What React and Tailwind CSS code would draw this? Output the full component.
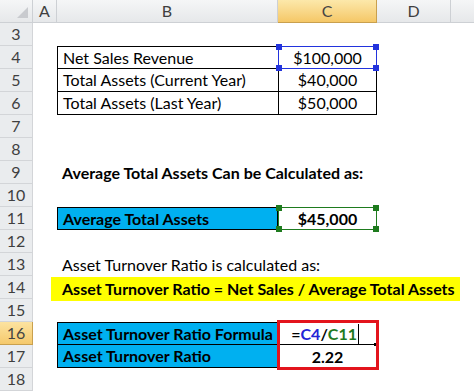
import React from 'react';

const font = { fontFamily: 'Lato, "Liberation Sans", sans-serif' };

const Head = ({ w, label, active }) => (
  <div
    className={`flex h-full shrink-0 items-center justify-center border-r border-b text-[16px] ${
      active
        ? 'border-[#c9a04e] bg-gradient-to-b from-[#fce8aa] to-[#f5c766] text-[#444]'
        : 'border-[#cdd0d4] bg-gradient-to-b from-[#f5f6f7] to-[#e6e8ea] text-[#3f3f3f]'
    } ${w}`}
  >
    {label}
  </div>
);

const Row = ({ n, active, children }) => (
  <div className="flex h-[23px]">
    <div
      className={`flex w-[33px] shrink-0 items-center justify-center border-r border-b text-[16px] ${
        active
          ? 'border-[#c9a04e] bg-gradient-to-b from-[#fce3a0] to-[#f5c96c] text-[#444]'
          : 'border-[#d3d5d8] bg-[#eaecee] text-[#3f3f3f]'
      }`}
    >
      {n}
    </div>
    <div className="w-[24px] shrink-0" />
    {children}
  </div>
);

const Handles = ({ color }) => (
  <>
    <span className={`absolute -left-[3px] -top-[3px] h-[6px] w-[6px] ${color}`} />
    <span className={`absolute -right-[3px] -top-[3px] h-[6px] w-[6px] ${color}`} />
    <span className={`absolute -bottom-[3px] -left-[3px] h-[6px] w-[6px] ${color}`} />
    <span className={`absolute -bottom-[3px] -right-[3px] h-[6px] w-[6px] ${color}`} />
  </>
);

const Empty = ({ n }) => (
  <Row n={n}>
    <div className="flex-1" />
  </Row>
);

export default function App() {
  return (
    <div className="relative h-[391px] w-[474px] overflow-hidden bg-white text-[16px] text-black" style={font}>
      {/* column headers */}
      <div className="flex h-[23px]">
        <div className="relative h-full w-[33px] shrink-0 border-r border-b border-[#cdd0d4] bg-gradient-to-b from-[#f5f6f7] to-[#e6e8ea]">
          <svg className="absolute right-[4px] bottom-[4px]" width="11" height="11" viewBox="0 0 11 11">
            <polygon points="11,0 11,11 0,11" fill="#c9cbcf" />
          </svg>
        </div>
        <Head w="w-[24px]" label="A" />
        <Head w="w-[221px]" label="B" />
        <Head w="w-[99px]" label="C" active />
        <Head w="w-[74px]" label="D" />
        <div className="h-full flex-1 border-b border-[#cdd0d4] bg-gradient-to-b from-[#f5f6f7] to-[#e6e8ea]" />
      </div>

      <Empty n={3} />

      <Row n={4}>
        <div className="flex w-[221px] shrink-0 items-center border-t border-b border-l border-black pl-[5px]">Net Sales Revenue</div>
        <div className="relative flex w-[99px] shrink-0 items-center justify-center border border-black">
          $100,000
          <div className="absolute -inset-[1px] border border-[#2233dd]">
            <Handles color="bg-[#2233dd]" />
          </div>
        </div>
      </Row>
      <Row n={5}>
        <div className="flex w-[221px] shrink-0 items-center border-b border-l border-black pl-[5px]">Total Assets (Current Year)</div>
        <div className="flex w-[99px] shrink-0 items-center justify-center border-r border-b border-l border-black">$40,000</div>
      </Row>
      <Row n={6}>
        <div className="flex w-[221px] shrink-0 items-center border-b border-l border-black pl-[5px]">Total Assets (Last Year)</div>
        <div className="flex w-[99px] shrink-0 items-center justify-center border-r border-b border-l border-black">$50,000</div>
      </Row>

      <Empty n={7} />
      <Empty n={8} />

      <Row n={9}>
        <div className="flex w-[221px] shrink-0 items-center whitespace-nowrap pl-[5px] font-bold">Average Total Assets Can be Calculated as:</div>
      </Row>

      <Empty n={10} />

      <Row n={11}>
        <div className="flex w-[221px] shrink-0 items-center border border-black bg-[#00b0f0] pl-[5px] font-bold">Average Total Assets</div>
        <div className="relative flex w-[99px] shrink-0 items-center justify-center font-bold">
          $45,000
          <div className="absolute inset-0 border border-[#1e7b1e]">
            <Handles color="bg-[#1e7b1e]" />
          </div>
        </div>
      </Row>

      <Empty n={12} />

      <Row n={13}>
        <div className="flex w-[221px] shrink-0 items-center whitespace-nowrap pl-[5px]">Asset Turnover Ratio is calculated as:</div>
      </Row>
      <Row n={14}>
        <div className="relative w-[221px] shrink-0">
          <div className="absolute -left-[6px] top-[1px] flex h-[24px] w-[409px] items-center whitespace-nowrap bg-[#ffff00] pl-[11px] font-bold">
            Asset Turnover Ratio = Net Sales / Average Total Assets
          </div>
        </div>
      </Row>

      <Empty n={15} />

      <Row n={16} active>
        <div className="flex w-[221px] shrink-0 items-center border border-black bg-[#00b0f0] pl-[5px] font-bold">Asset Turnover Ratio Formula</div>
        <div className="relative flex w-[99px] shrink-0 items-center justify-end font-bold">
          <span>=</span>
          <span className="text-[#2424d6]">C4</span>
          <span>/</span>
          <span className="text-[#1f7a1f]">C11</span>
          <span className="ml-[1px] mr-[18px] h-[20px] w-[1px] bg-black" />
          <span className="absolute bottom-0 left-0 h-[1px] w-[97px] bg-black" />
          <span className="absolute -bottom-[1px] left-[96px] h-[3px] w-[3px] bg-black" />
        </div>
      </Row>
      <Row n={17}>
        <div className="flex w-[221px] shrink-0 items-center border-r border-b border-l border-black bg-[#00b0f0] pl-[5px] font-bold">Asset Turnover Ratio</div>
        <div className="flex w-[99px] shrink-0 items-center justify-center font-bold">2.22</div>
      </Row>

      <Empty n={18} />

      {/* red highlight around C16:C17 */}
      <div className="absolute left-[277px] top-[320px] h-[50px] w-[102px] border-[3px] border-[#e3141c]" />
    </div>
  );
}
